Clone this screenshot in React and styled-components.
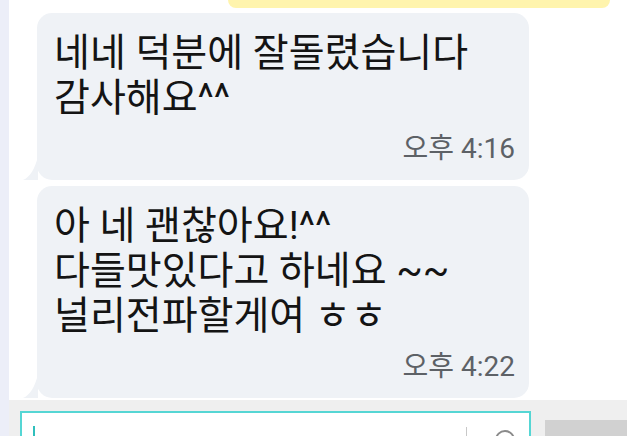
import React from "react";
import styled, { createGlobalStyle } from "styled-components";

const GlobalStyle = createGlobalStyle`
  html, body {
    margin: 0;
    padding: 0;
    background: #fff;
    overflow: hidden;
  }
  body {
    font-family: Roboto, "Noto Sans CJK KR", sans-serif;
  }
`;

const Screen = styled.div`
  display: flex;
  width: 627px;
  height: 436px;
  overflow: hidden;
  background: #fff;
`;

const SideStrip = styled.div`
  width: 9px;
  flex-shrink: 0;
  background: #eceef8;
`;

const Main = styled.div`
  flex: 1;
  display: flex;
  flex-direction: column;
  min-width: 0;
`;

const TopRow = styled.div`
  display: flex;
  justify-content: flex-end;
  padding-right: 17px;
  height: 8px;
`;

const MyBubbleEdge = styled.div`
  width: 382px;
  height: 8px;
  background: #fff4ad;
  border-radius: 0 0 10px 10px;
`;

const ChatList = styled.div`
  flex: 1;
  display: flex;
  flex-direction: column;
  gap: 6px;
  padding: 5px 0 0 28px;
`;

const Bubble = styled.div`
  position: relative;
  width: 492px;
  box-sizing: border-box;
  padding: 18px 14px 15px 17px;
  background: #eff2f6;
  border-radius: 15px;
  color: #141414;
`;

const Tail = styled.svg`
  position: absolute;
  left: -15px;
  bottom: 0;
`;

const Message = styled.div`
  font-size: 39px;
  line-height: 45px;
  white-space: pre-line;
`;

const Time = styled.div`
  margin-top: 11px;
  text-align: right;
  font-size: 28px;
  line-height: 33px;
  color: #5d6166;
`;

const BottomBar = styled.div`
  display: flex;
  align-items: flex-start;
  gap: 14px;
  height: 36px;
  flex-shrink: 0;
  padding: 11px 0 0 11px;
  box-sizing: border-box;
  background: #efefef;
`;

const InputBox = styled.div`
  position: relative;
  width: 511px;
  height: 40px;
  box-sizing: border-box;
  border: 2px solid #55d6d4;
  background: #fff;
  display: flex;
  align-items: flex-start;
  padding: 13px 0 0 11px;
`;

const Cursor = styled.div`
  width: 2px;
  height: 20px;
  background: #2fbfbc;
`;

const Divider = styled.div`
  margin-left: auto;
  margin-top: 1px;
  width: 1px;
  height: 20px;
  background: #c8c8c8;
`;

const EmojiIcon = styled.div`
  width: 16px;
  height: 16px;
  margin: 4px 14px 0 28px;
  border: 2px solid #8a8a8a;
  border-radius: 50%;
`;

const SendButton = styled.div`
  flex: 1;
  height: 30px;
  margin-top: 9px;
  background: #d1d1d1;
`;

const messages = [
  { id: 1, text: "네네 덕분에 잘돌렸습니다\n감사해요^^", time: "오후 4:16" },
  {
    id: 2,
    text: "아 네 괜찮아요!^^\n다들맛있다고 하네요 ~~\n널리전파할게여 ㅎㅎ",
    time: "오후 4:22",
  },
];

const BubbleTail = () => (
  <Tail width="22" height="24" viewBox="0 0 22 24">
    <path d="M16 0 L16 24 L1 24 C8 21 13 13 16 0 Z" fill="#eff2f6" />
  </Tail>
);

export default function App() {
  return (
    <>
      <GlobalStyle />
      <Screen>
        <SideStrip />
        <Main>
          <TopRow>
            <MyBubbleEdge />
          </TopRow>
          <ChatList>
            {messages.map((m) => (
              <Bubble key={m.id}>
                <BubbleTail />
                <Message>{m.text}</Message>
                <Time>{m.time}</Time>
              </Bubble>
            ))}
          </ChatList>
          <BottomBar>
            <InputBox>
              <Cursor />
              <Divider />
              <EmojiIcon />
            </InputBox>
            <SendButton />
          </BottomBar>
        </Main>
      </Screen>
    </>
  );
}
